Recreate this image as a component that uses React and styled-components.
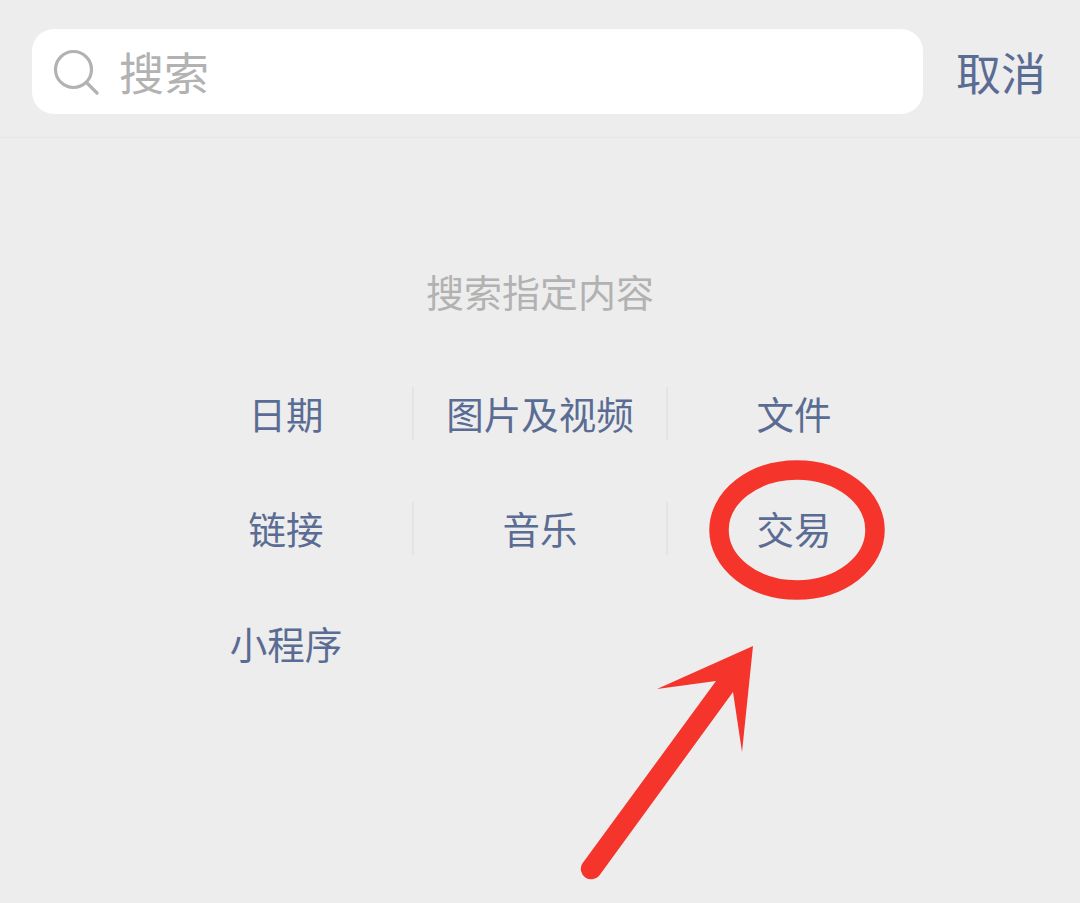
import styled, { createGlobalStyle } from "styled-components";

const GlobalStyle = createGlobalStyle`
  html, body {
    margin: 0;
    padding: 0;
    background-color: #ededed;
  }
  body {
    font-family: "Noto Sans CJK SC", "Noto Sans", sans-serif;
  }
`;

const Page = styled.div`
  position: relative;
  width: 1080px;
  height: 903px;
  overflow: hidden;
  background-color: #ededed;
`;

const Header = styled.header`
  display: flex;
  align-items: center;
  justify-content: space-between;
  box-sizing: border-box;
  height: 138px;
  padding: 6px 34px 0 32px;
  border-bottom: 1px solid #e6e6e6;
`;

const SearchBox = styled.div`
  display: flex;
  align-items: center;
  gap: 20px;
  box-sizing: border-box;
  width: 891px;
  height: 85px;
  padding-left: 21px;
  background-color: #ffffff;
  border-radius: 22px;
`;

const Placeholder = styled.span`
  font-size: 45px;
  line-height: 1;
  color: #b2b2b2;
`;

const Cancel = styled.span`
  font-size: 45px;
  line-height: 1;
  color: #5a6c93;
`;

const Prompt = styled.p`
  margin: 130px 0 73px;
  font-size: 38px;
  line-height: 46px;
  text-align: center;
  color: #b2b2b2;
`;

const Options = styled.div`
  display: grid;
  grid-template-columns: repeat(3, 254px);
  row-gap: 62px;
  justify-content: center;
  padding-left: 2px;
`;

const Option = styled.div`
  display: flex;
  align-items: center;
  justify-content: center;
  height: 53px;
  padding-bottom: 2px;
  box-sizing: border-box;
  font-size: 37.5px;
  color: #5a6c93;
  border-right: ${(props) => (props.$divider ? "2px solid #e4e4e4" : "2px solid transparent")};
`;

const Annotation = styled.svg`
  position: absolute;
  top: 0;
  left: 0;
`;

const options = [
  { label: "日期", divider: true },
  { label: "图片及视频", divider: true },
  { label: "文件" },
  { label: "链接", divider: true },
  { label: "音乐", divider: true },
  { label: "交易" },
  { label: "小程序" },
];

const App = () => {
  return (
    <Page>
      <GlobalStyle />
      <Header>
        <SearchBox>
          <svg width="46" height="46" viewBox="0 0 46 46" fill="none" stroke="#b2b2b2" strokeWidth="3.2" strokeLinecap="round">
            <circle cx="20.5" cy="20.5" r="18" />
            <path d="M33.5 33.5L44 44" />
          </svg>
          <Placeholder>搜索</Placeholder>
        </SearchBox>
        <Cancel>取消</Cancel>
      </Header>
      <Prompt>搜索指定内容</Prompt>
      <Options>
        {options.map((option) => (
          <Option key={option.label} $divider={option.divider}>
            {option.label}
          </Option>
        ))}
      </Options>
      <Annotation width="1080" height="903" viewBox="0 0 1080 903">
        <ellipse cx="797" cy="530" rx="78" ry="60" fill="none" stroke="#f5352b" strokeWidth="19.5" />
        <path
          d="M753 646L657 689L716 681L582 864A10.5 10.5 0 0 0 599 876L733 692L742 752Z"
          fill="#f5352b"
        />
      </Annotation>
    </Page>
  );
};

export default App;
